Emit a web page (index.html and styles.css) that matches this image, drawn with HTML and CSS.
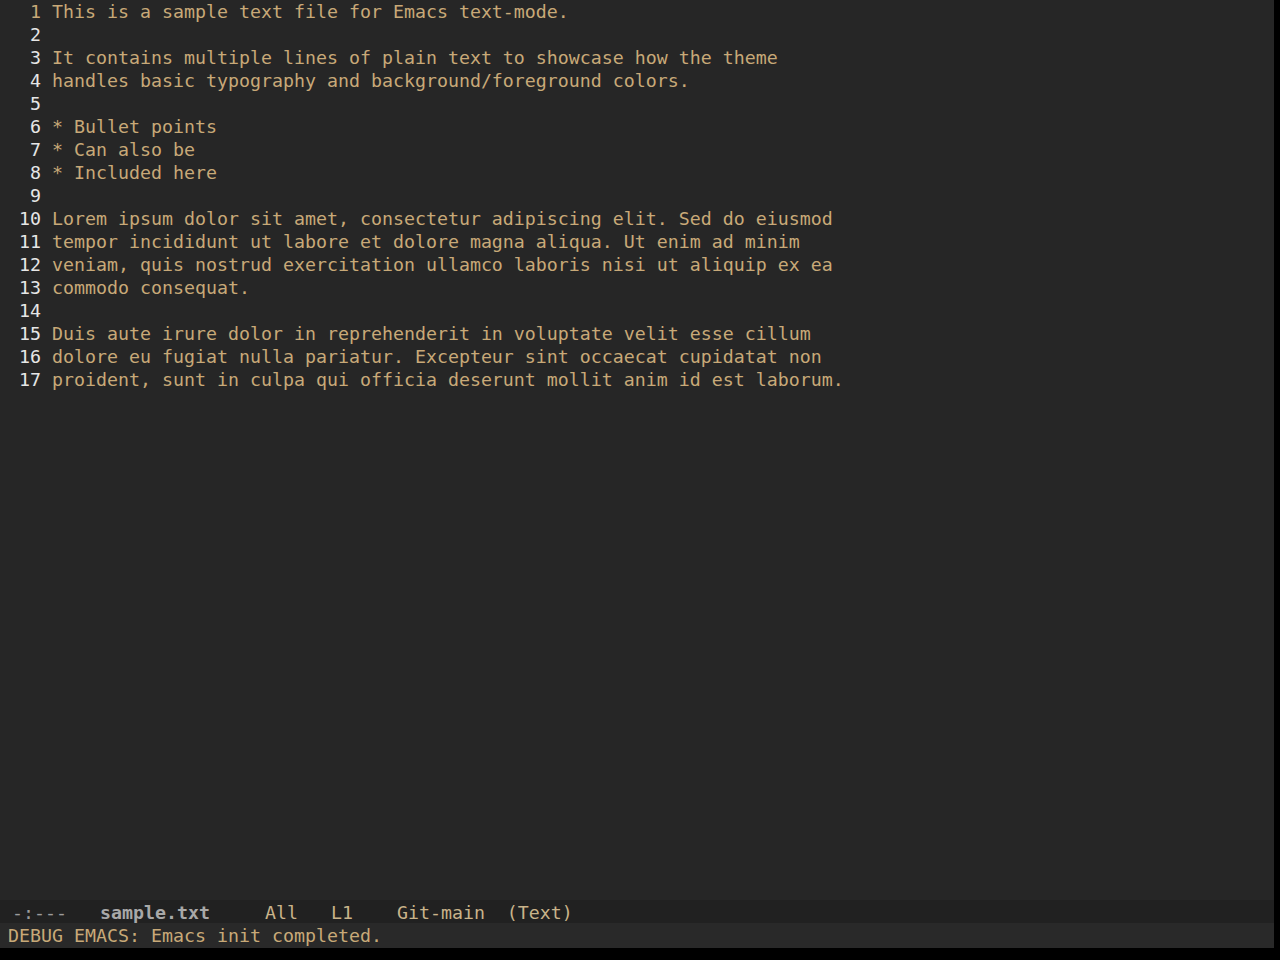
FILE: index.html
```html
<!DOCTYPE html>
<html>
<head>
<meta charset="utf-8">
<link rel="stylesheet" href="styles.css">
</head>
<body>
<div class="frame">
  <div class="buffer">
    <div class="line current"><span class="num">1</span><span class="txt">This is a sample text file for Emacs text-mode.</span></div>
    <div class="line"><span class="num">2</span><span class="txt"></span></div>
    <div class="line"><span class="num">3</span><span class="txt">It contains multiple lines of plain text to showcase how the theme</span></div>
    <div class="line"><span class="num">4</span><span class="txt">handles basic typography and background/foreground colors.</span></div>
    <div class="line"><span class="num">5</span><span class="txt"></span></div>
    <div class="line"><span class="num">6</span><span class="txt">* Bullet points</span></div>
    <div class="line"><span class="num">7</span><span class="txt">* Can also be</span></div>
    <div class="line"><span class="num">8</span><span class="txt">* Included here</span></div>
    <div class="line"><span class="num">9</span><span class="txt"></span></div>
    <div class="line"><span class="num">10</span><span class="txt">Lorem ipsum dolor sit amet, consectetur adipiscing elit. Sed do eiusmod</span></div>
    <div class="line"><span class="num">11</span><span class="txt">tempor incididunt ut labore et dolore magna aliqua. Ut enim ad minim</span></div>
    <div class="line"><span class="num">12</span><span class="txt">veniam, quis nostrud exercitation ullamco laboris nisi ut aliquip ex ea</span></div>
    <div class="line"><span class="num">13</span><span class="txt">commodo consequat.</span></div>
    <div class="line"><span class="num">14</span><span class="txt"></span></div>
    <div class="line"><span class="num">15</span><span class="txt">Duis aute irure dolor in reprehenderit in voluptate velit esse cillum</span></div>
    <div class="line"><span class="num">16</span><span class="txt">dolore eu fugiat nulla pariatur. Excepteur sint occaecat cupidatat non</span></div>
    <div class="line"><span class="num">17</span><span class="txt">proident, sunt in culpa qui officia deserunt mollit anim id est laborum.</span></div>
  </div>
  <div class="modeline"><span class="ml-status"> -:---   </span><span class="ml-name">sample.txt</span><span class="ml-info">     All   L1    Git-main  (Text)</span></div>
  <div class="echo">DEBUG EMACS: Emacs init completed.</div>
</div>
</body>
</html>
```
FILE: styles.css
```css
html, body {
  margin: 0;
  padding: 0;
  background: #000;
  width: 1280px;
  height: 960px;
  overflow: hidden;
}

.frame {
  width: 1274px;
  height: 948px;
  display: flex;
  flex-direction: column;
  background: #262626;
  font-family: "DejaVu Sans Mono", monospace;
  font-size: 18.27px;
  line-height: 23px;
  color: #c8a978;
}

.buffer {
  height: 900px;
  padding-left: 8px;
  box-sizing: border-box;
}

.line {
  display: flex;
  height: 23px;
  white-space: pre;
}

.num {
  width: 33px;
  margin-right: 11px;
  text-align: right;
  color: #e6e6e6;
  flex: none;
}

.line.current .num {
  color: #c8a978;
}

.txt {
  white-space: pre;
}

.modeline {
  height: 23px;
  box-sizing: border-box;
  padding-top: 1px;
  padding-left: 1px;
  background: #212121;
  white-space: pre;
  color: #c9b38a;
}

.ml-status {
  color: #9b9b9b;
}

.ml-name {
  color: #a8a8a8;
  font-weight: bold;
}

.echo {
  height: 25px;
  line-height: 25px;
  background: #292929;
  padding-left: 8px;
  white-space: pre;
  color: #c8a978;
}
```
